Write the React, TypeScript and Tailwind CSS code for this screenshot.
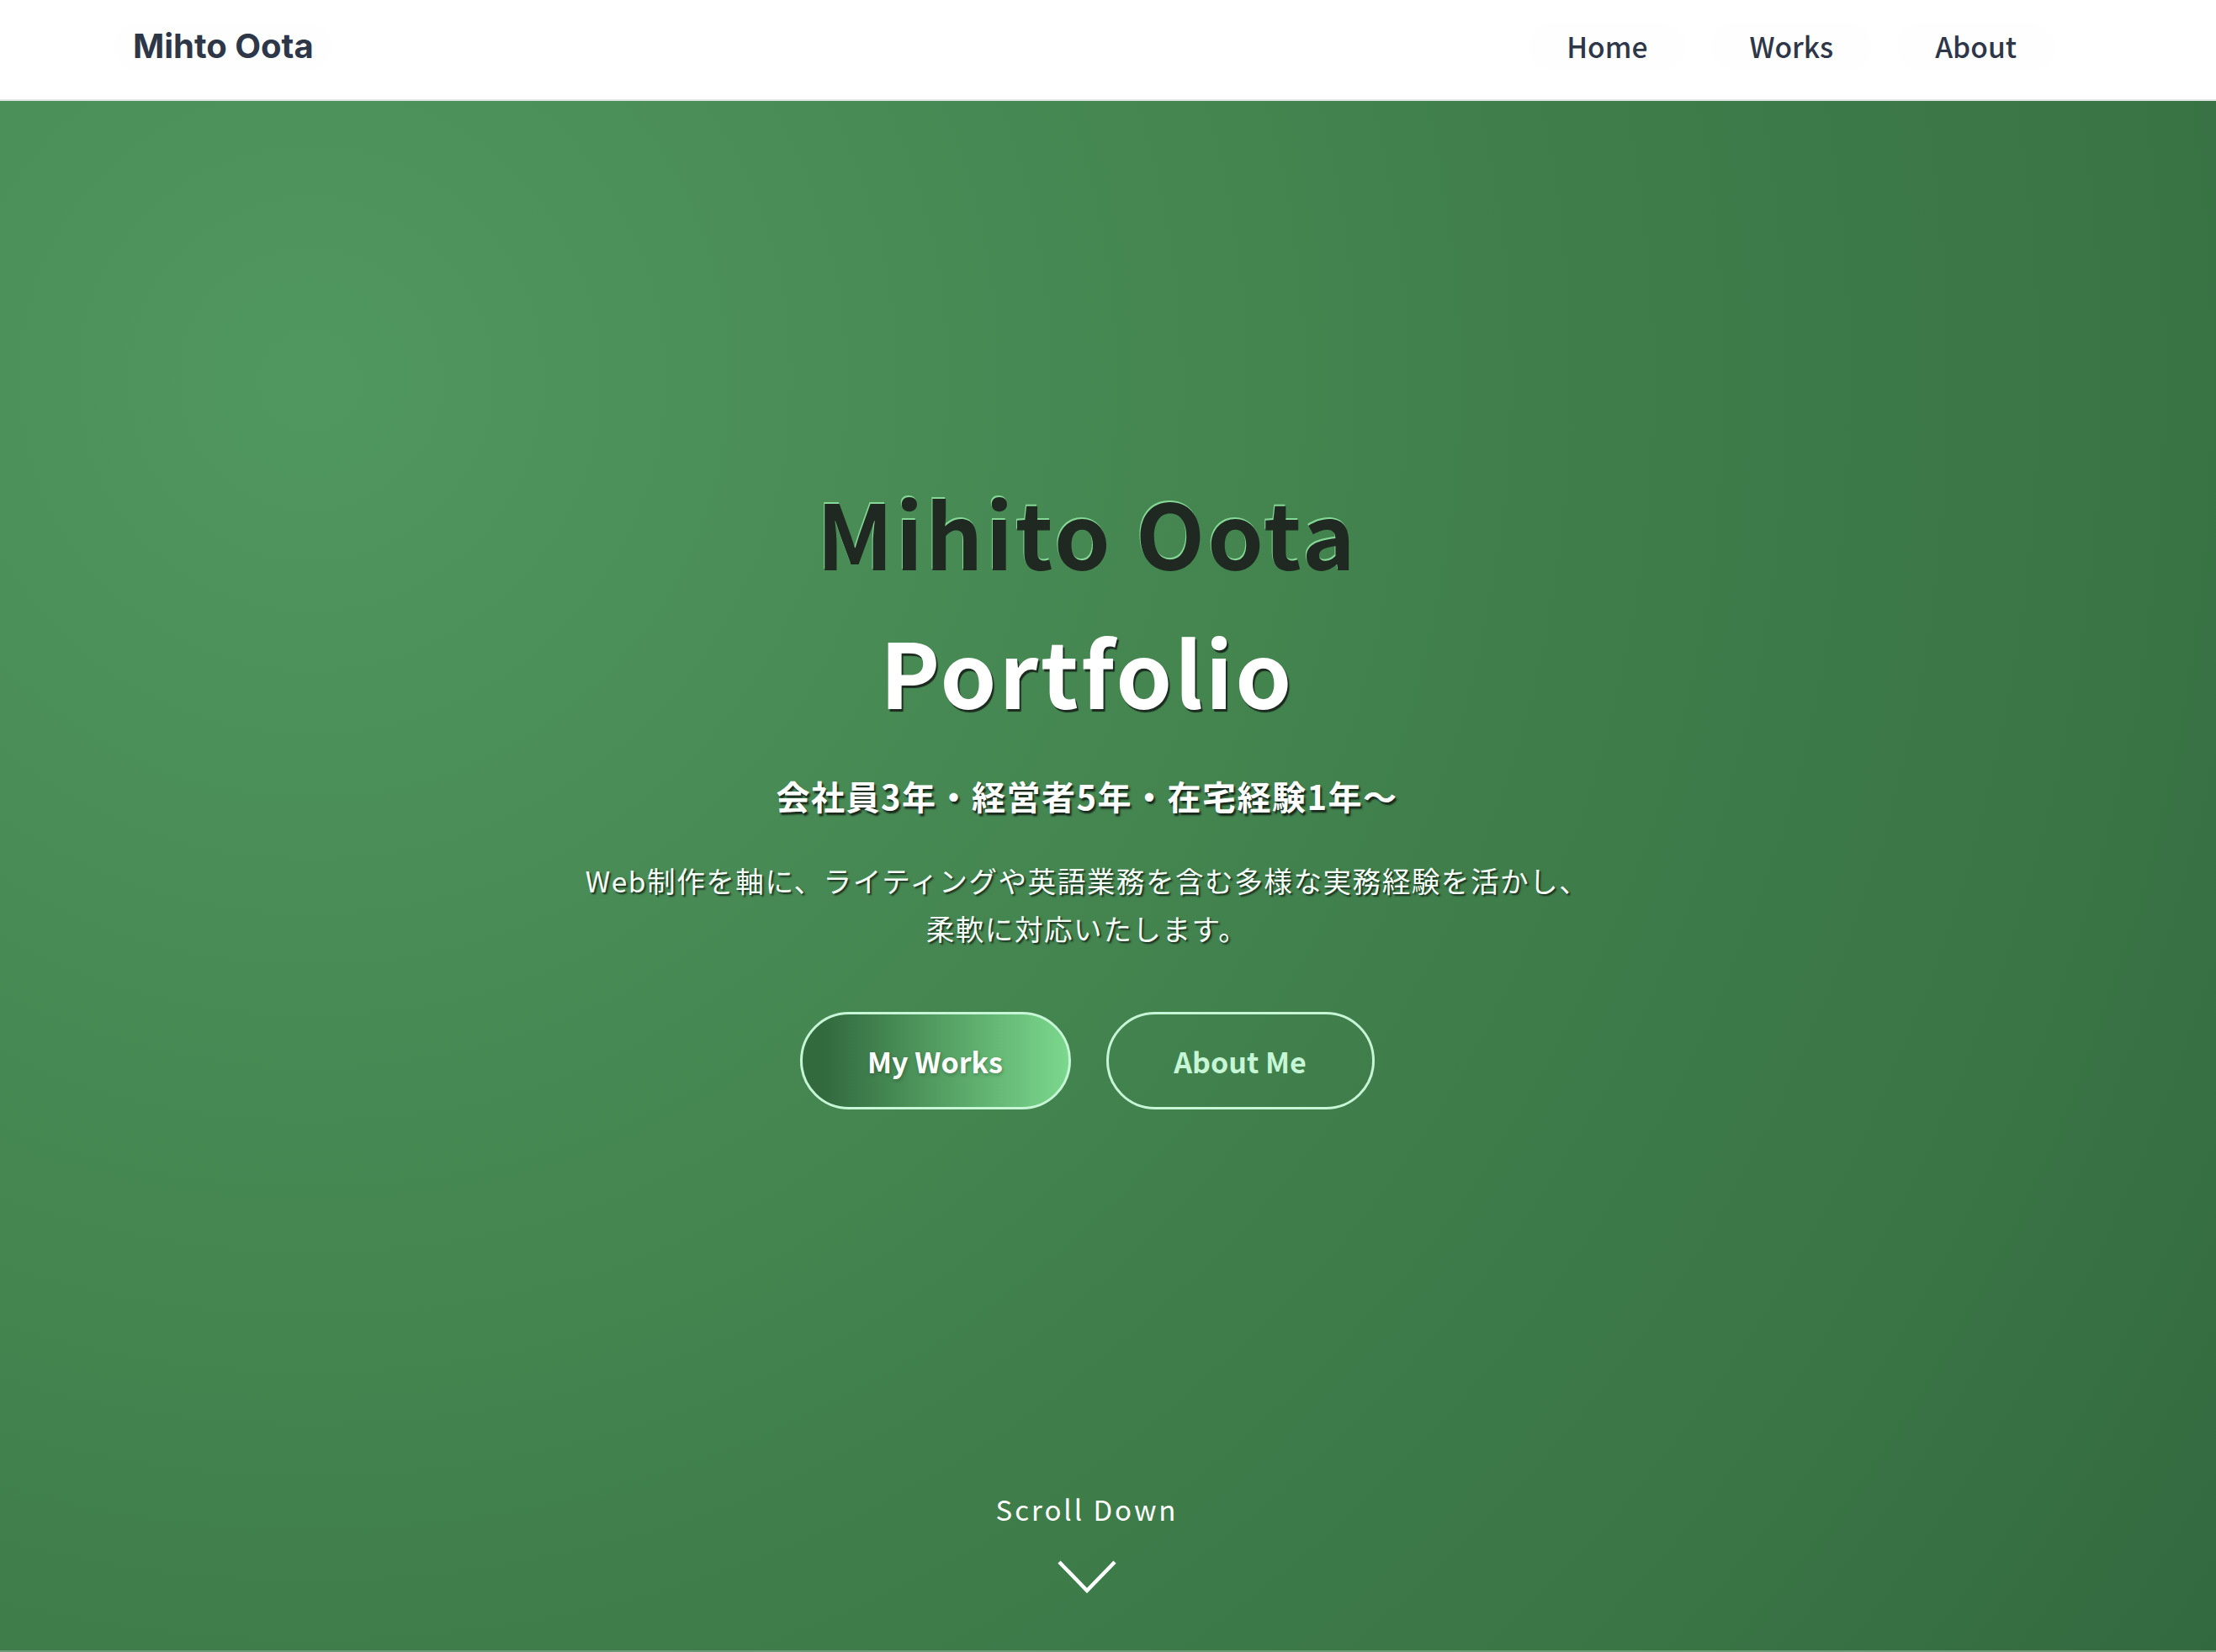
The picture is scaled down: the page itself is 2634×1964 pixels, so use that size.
export default function App() {
  const jp = "font-['Noto_Sans_CJK_JP','Noto_Sans',sans-serif]";
  return (
    <div className={`w-full min-h-screen bg-white ${jp}`}>
      {/* header */}
      <header className="h-[120px] bg-white border-b-2 border-[#dfe5e1] flex items-center justify-between pl-[136px] pr-[192px] pb-[8px]">
        <a href="#" className="px-[22px] py-2 rounded-full bg-[#fefefe]">
          <span className="font-['Inter',sans-serif] font-bold text-[40px] leading-none text-[#2d3748]">
            Mihto Oota
          </span>
        </a>
        <nav className="flex items-center gap-[31px]">
          {["Home", "Works", "About"].map((item) => (
            <a
              key={item}
              href="#"
              className="px-[45px] py-3 rounded-full bg-[#fefefe] text-[33.6px] font-medium leading-none text-[#2d3748]"
            >
              {item}
            </a>
          ))}
        </nav>
      </header>

      {/* hero */}
      <section className="h-[1842px] flex flex-col items-center pr-[50px] pt-[429px] bg-[radial-gradient(circle_farthest-corner_at_14%_18%,#50975f_0%,#4a8d57_22%,#43844f_42%,#3e7c4a_60%,#397445_82%,#33693f_100%)]">
        <h1 className="flex flex-col items-center font-bold text-[107px] leading-[165px] tracking-[0.027em]">
          <span className="text-[#1f2821] [text-shadow:-1px_-2px_0_#86d896]">Mihito Oota</span>
          <span className="text-white [text-shadow:2px_3px_1px_#1c2a20]">Portfolio</span>
        </h1>

        <p className="mt-[37px] text-[40px] leading-[60px] font-bold tracking-[0.037em] text-white [text-shadow:2px_3px_2px_rgba(20,30,22,0.9)]">
          会社員3年・経営者5年・在宅経験1年〜
        </p>

        <p className="mt-[42px] text-center text-[33.6px] leading-[57px] tracking-[0.045em] text-[#f4fff6] [text-shadow:2px_2px_2px_rgba(20,30,22,0.85)]">
          Web制作を軸に、ライティングや英語業務を含む多様な実務経験を活かし、
          <br />
          柔軟に対応いたします。
        </p>

        <div className="mt-[71px] flex gap-[42px]">
          <a
            href="#"
            className="w-[322px] h-[116px] rounded-full border-[3px] border-[#c6f6d5] flex items-center justify-center bg-[linear-gradient(90deg,#326a3e_8%,#4a9058_40%,#63b573_70%,#7bd88d_100%)] text-white font-bold text-[34px] [text-shadow:1px_2px_4px_rgba(0,0,0,0.25)]"
          >
            My Works
          </a>
          <a
            href="#"
            className="w-[319px] h-[116px] rounded-full border-[3px] border-[#c6f6d5] flex items-center justify-center text-[#c6f6d5] font-bold text-[34px]"
          >
            About Me
          </a>
        </div>

        <div className="mt-auto pb-[66px] flex flex-col items-center">
          <span className="text-[33px] leading-[50px] tracking-[0.09em] text-white">Scroll Down</span>
          <svg
            className="mt-[35px]"
            width="72"
            height="42"
            viewBox="0 0 72 42"
            fill="none"
            stroke="white"
            strokeWidth="4.5"
          >
            <polyline points="3,3 36,37 69,3" />
          </svg>
        </div>
      </section>
      <div className="h-[2px] bg-[#6e9a77]" />
    </div>
  );
}
